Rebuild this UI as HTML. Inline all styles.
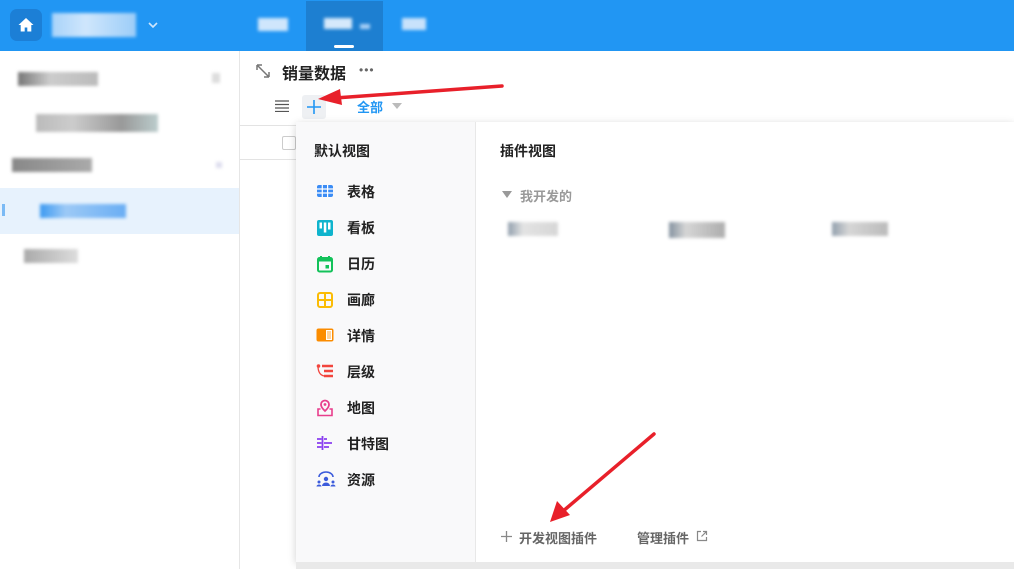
<!DOCTYPE html>
<html><head><meta charset="utf-8"><style>
*{margin:0;padding:0;box-sizing:border-box}
body{width:1014px;height:569px;overflow:hidden;background:#fff;font-family:"Liberation Sans","Noto Sans CJK SC",sans-serif;position:relative}
.abs{position:absolute}
.top{left:0;top:0;width:1014px;height:51px;background:#2196f3}
.blur{position:absolute;filter:blur(1.5px)}
.mi{position:absolute;left:20px;font-size:14px;color:#222;font-weight:bold;white-space:nowrap;width:150px;height:20px;line-height:20px}
.mi svg{position:absolute;left:0;top:1px}
.mi span{margin-left:31px}
</style></head><body>
<div class="abs top"></div>
<div class="abs" style="left:10px;top:9px;width:32px;height:32px;border-radius:7px;background:#1c7fd6"></div>
<svg class="abs" style="left:17px;top:16px" width="18" height="18" viewBox="0 0 18 18"><path d="M9 2L1.5 9h2.2v6.5h4v-4h2.6v4h4V9h2.2z" fill="#fff"/></svg>
<div class="blur" style="left:52px;top:13px;width:84px;height:24px;background:linear-gradient(90deg,#a8d3fa,#cfe6fc 40%,#9ccdf8)"></div>
<svg class="abs" style="left:147px;top:20px" width="12" height="10"><path d="M2 3l4 4 4-4" stroke="#cfe6fc" stroke-width="1.6" fill="none"/></svg>
<div class="blur" style="left:258px;top:18px;width:30px;height:13px;background:#cfe6fc"></div>
<div class="abs" style="left:306px;top:1px;width:77px;height:50px;background:#1d7fd1"></div>
<div class="blur" style="left:324px;top:18px;width:28px;height:11px;background:#d6e9fb"></div>
<div class="blur" style="left:360px;top:24px;width:10px;height:5px;background:#a9d0f6"></div>
<div class="abs" style="left:334px;top:45px;width:20px;height:3px;border-radius:2px;background:#fff"></div>
<div class="blur" style="left:402px;top:18px;width:24px;height:12px;background:#c8e2fb"></div>
<!-- sidebar -->
<div class="abs" style="left:239px;top:51px;width:1px;height:518px;background:#e6e6e6"></div>
<div class="blur" style="left:18px;top:72px;width:80px;height:14px;background:linear-gradient(90deg,#777,#ccc 40%,#bbb)"></div>
<div class="blur" style="left:212px;top:73px;width:8px;height:10px;background:#ddd"></div>
<div class="blur" style="left:36px;top:114px;width:122px;height:18px;background:linear-gradient(90deg,#bbb,#ccc 30%,#999 70%,#bcc)"></div>
<div class="blur" style="left:12px;top:158px;width:80px;height:14px;background:linear-gradient(90deg,#888,#aaa)"></div>
<div class="blur" style="left:216px;top:162px;width:6px;height:6px;background:#dde"></div>
<div class="abs" style="left:0;top:188px;width:239px;height:46px;background:#e7f2fd"></div>
<div class="abs" style="left:2px;top:204px;width:3px;height:12px;background:#7bbaf5"></div>
<div class="blur" style="left:40px;top:204px;width:86px;height:14px;background:linear-gradient(90deg,#3d9af1,#9cc9f6 30%,#6aaef4)"></div>
<div class="blur" style="left:24px;top:249px;width:54px;height:14px;background:linear-gradient(90deg,#aaa,#ddd)"></div>
<!-- main header -->
<svg class="abs" style="left:255px;top:63px" width="16" height="16" viewBox="0 0 16 16"><path d="M2 2l12 12M2 2v5M2 2h5M14 14v-5M14 14h-5" stroke="#777" stroke-width="1.5" fill="none"/></svg>
<div class="abs" style="left:282px;top:60px;font-size:16px;font-weight:bold;color:#222">销量数据</div>
<div class="abs" style="left:359px;top:63px;font-size:12px;color:#666;letter-spacing:1px">•••</div>
<svg class="abs" style="left:275px;top:100px" width="14" height="12"><path d="M0 1h14M0 4.5h14M0 8h14M0 11.5h14" stroke="#555" stroke-width="1.3"/></svg>
<div class="abs" style="left:302px;top:95px;width:24px;height:24px;border-radius:3px;background:#eef0f3"></div>
<svg class="abs" style="left:307px;top:100px" width="14" height="14"><path d="M7 0v14M0 7h14" stroke="#2196f3" stroke-width="1.6"/></svg>
<div class="abs" style="left:357px;top:97px;font-size:13px;color:#2196f3;font-weight:bold">全部</div>
<svg class="abs" style="left:392px;top:103px" width="10" height="6"><path d="M0 0h10L5 6z" fill="#bbb"/></svg>
<div class="abs" style="left:240px;top:125px;width:774px;height:1px;background:#e3e3e3"></div>
<div class="abs" style="left:240px;top:159px;width:60px;height:1px;background:#e3e3e3"></div>
<div class="abs" style="left:282px;top:136px;width:14px;height:14px;border:1px solid #ccc;border-radius:2px;background:#fff"></div>
<!-- popup -->
<div class="abs" style="left:296px;top:122px;width:718px;height:440px;background:#fff;box-shadow:0 2px 8px rgba(0,0,0,.18)"></div>
<div class="abs" style="left:296px;top:122px;width:180px;height:440px;background:#f9f9fa;border-right:1px solid #e8e8e8"></div>
<div class="abs" style="left:296px;top:562px;width:718px;height:7px;background:#e9e9e9"></div>
<div class="abs" style="left:314px;top:141px;font-size:14px;font-weight:bold;color:#222">默认视图</div>
<div class="abs" style="left:296px;top:0">
<div class="mi" style="top:182px"><svg width="18" height="16" viewBox="0 0 18 16"><rect x="1" y="2" width="16" height="12" rx="2" fill="#3b8cf5"/><path d="M6.3 2v12M11.6 2v12M1 6h16M1 10h16" stroke="#fff" stroke-width="1.2"/></svg><span>表格</span></div>
<div class="mi" style="top:218px"><svg width="18" height="18" viewBox="0 0 18 18"><rect x="1" y="1" width="16" height="16" rx="2" fill="#0fb4cd"/><rect x="3.5" y="3.5" width="2.5" height="6" fill="#fff"/><rect x="7.8" y="3.5" width="2.5" height="10" fill="#fff"/><rect x="12" y="3.5" width="2.5" height="7" fill="#fff"/></svg><span>看板</span></div>
<div class="mi" style="top:254px"><svg width="18" height="18" viewBox="0 0 18 18"><rect x="2" y="3" width="14" height="13.5" rx="1.5" fill="none" stroke="#13c25a" stroke-width="2"/><path d="M2 5h14" stroke="#13c25a" stroke-width="3"/><path d="M5 1v3M13 1v3" stroke="#13c25a" stroke-width="2"/><rect x="9.5" y="10" width="3.5" height="3.5" fill="#13c25a"/></svg><span>日历</span></div>
<div class="mi" style="top:290px"><svg width="18" height="18" viewBox="0 0 18 18"><rect x="2" y="2" width="14" height="14" rx="2" fill="none" stroke="#fbbc05" stroke-width="2"/><path d="M9 2v14M2 9h14" stroke="#fbbc05" stroke-width="2"/></svg><span>画廊</span></div>
<div class="mi" style="top:326px"><svg width="18" height="16" viewBox="0 0 18 16"><rect x="0.5" y="1.5" width="17" height="13" rx="2" fill="#fb8c00"/><rect x="10" y="3" width="6" height="10" fill="#fff"/><path d="M11 5h4M11 7h4M11 9h4M11 11h4" stroke="#fb8c00" stroke-width=".8"/></svg><span>详情</span></div>
<div class="mi" style="top:362px"><svg width="18" height="16" viewBox="0 0 18 16"><path d="M6 3h11M8 8h9M8 13h9" stroke="#f2453d" stroke-width="2.5"/><path d="M2 3c0 6 2 9 6 10" stroke="#f2453d" stroke-width="1.3" fill="none"/><circle cx="2.5" cy="3" r="1.8" fill="#f2453d"/></svg><span>层级</span></div>
<div class="mi" style="top:398px"><svg width="18" height="18" viewBox="0 0 18 18"><path d="M9 1.5a4 4 0 0 1 4 4c0 3-4 6.5-4 6.5S5 8.5 5 5.5a4 4 0 0 1 4-4z" fill="none" stroke="#e83e8c" stroke-width="1.8"/><circle cx="9" cy="5.5" r="1.4" fill="#e83e8c"/><path d="M4.5 10H2v6.5h14V10h-2.5" fill="none" stroke="#e83e8c" stroke-width="1.6"/></svg><span>地图</span></div>
<div class="mi" style="top:434px"><svg width="18" height="16" viewBox="0 0 18 16"><path d="M6.5 1v14" stroke="#8a3ff0" stroke-width="1.8"/><path d="M1 4h4.5M1 8h4.5M1 12h4.5M8 4h3M8 8h8M8 12h5" stroke="#8a3ff0" stroke-width="1.8"/></svg><span>甘特图</span></div>
<div class="mi" style="top:470px"><svg width="20" height="16" viewBox="0 0 20 16"><path d="M3 6a7 5 0 0 1 14 0" stroke="#3b5bdb" stroke-width="1.6" fill="none"/><circle cx="10" cy="8" r="2.2" fill="#3b5bdb"/><path d="M6 15a4 3.5 0 0 1 8 0z" fill="#3b5bdb"/><circle cx="3" cy="11" r="1.5" fill="#3b5bdb"/><circle cx="17" cy="11" r="1.5" fill="#3b5bdb"/><path d="M0.5 15.5a2.5 2 0 0 1 5 0zM14.5 15.5a2.5 2 0 0 1 5 0z" fill="#3b5bdb"/></svg><span>资源</span></div>
</div>
<div class="abs" style="left:500px;top:141px;font-size:14px;font-weight:bold;color:#222">插件视图</div>
<svg class="abs" style="left:502px;top:191px" width="10" height="7"><path d="M0 0h10L5 7z" fill="#999"/></svg>
<div class="abs" style="left:520px;top:186px;font-size:13px;color:#999;font-weight:bold">我开发的</div>
<div class="blur" style="left:508px;top:222px;width:50px;height:14px;background:linear-gradient(90deg,#789,#ddd 30%,#ccc);opacity:.8"></div>
<div class="blur" style="left:669px;top:222px;width:56px;height:16px;background:linear-gradient(90deg,#678,#ccc 30%,#999);opacity:.8"></div>
<div class="blur" style="left:832px;top:222px;width:56px;height:14px;background:linear-gradient(90deg,#789,#ccc 30%,#aaa);opacity:.8"></div>
<svg class="abs" style="left:501px;top:531px" width="11" height="11"><path d="M5.5 0v11M0 5.5h11" stroke="#888" stroke-width="1.3"/></svg>
<div class="abs" style="left:519px;top:528px;font-size:13px;color:#666;font-weight:bold">开发视图插件</div>
<div class="abs" style="left:637px;top:528px;font-size:13px;color:#666;font-weight:bold">管理插件</div>
<svg class="abs" style="left:696px;top:530px" width="12" height="12" viewBox="0 0 12 12"><path d="M5 1.5H1.5v9h9V7M7 1.5h3.5V5M10.5 1.5L5.5 6.5" stroke="#888" stroke-width="1.2" fill="none"/></svg>
<!-- arrows -->
<svg class="abs" style="left:0;top:0" width="1014" height="569">
<path d="M502 86L335 98" stroke="#e8202a" stroke-width="3.5" stroke-linecap="round"/>
<path d="M318 99l22-10 2 16z" fill="#e8202a"/>
<path d="M654 434L562 512" stroke="#e8202a" stroke-width="3.5" stroke-linecap="round"/>
<path d="M550 522l7-21 13 14z" fill="#e8202a"/>
</svg>
</body></html>
